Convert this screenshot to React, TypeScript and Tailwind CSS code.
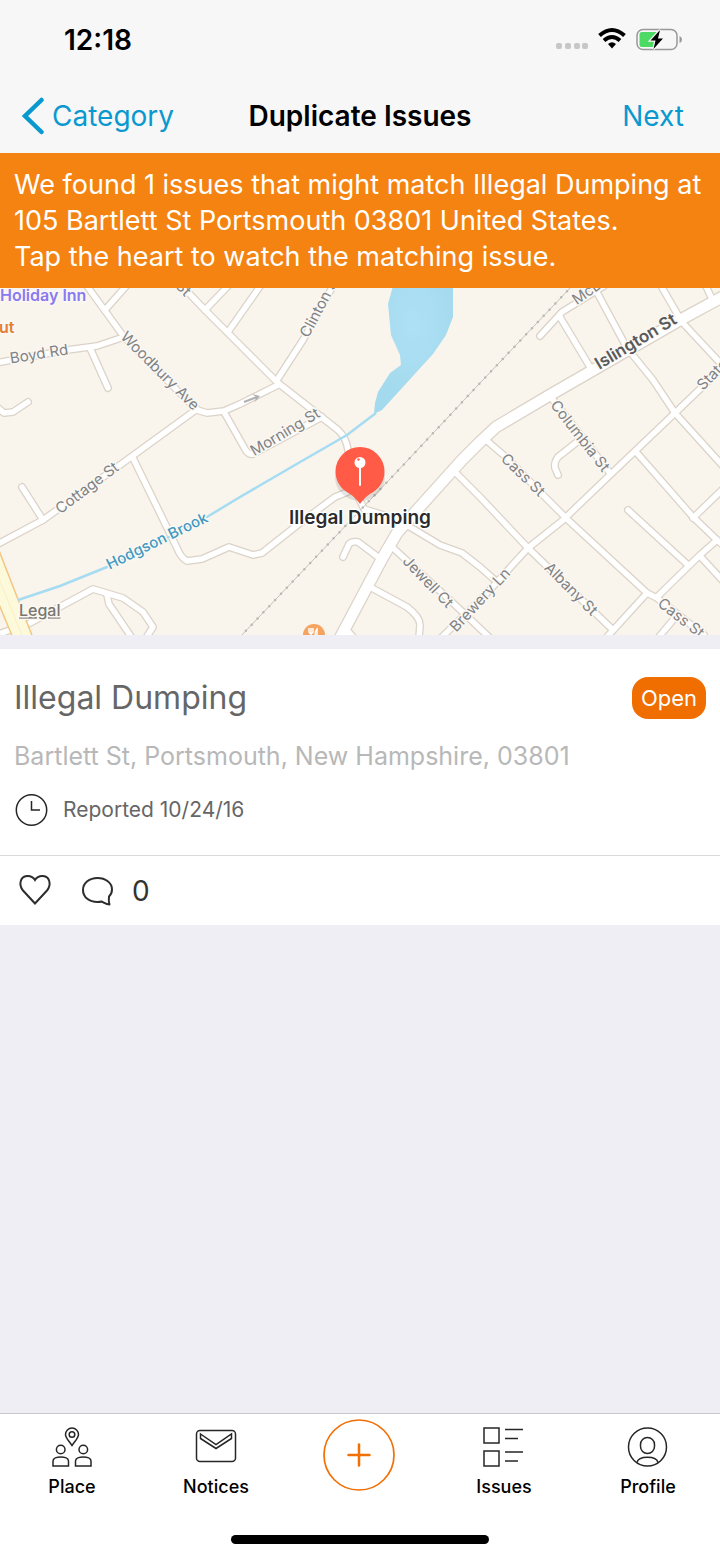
import { useState } from 'react'

const ROADS = [
  'M87 286 L124 337 L197 410 L207 413 L224 411 L240 404 L278 385',
  'M105 310 L128 284',
  'M-4 363 L67 350 L97 346 L124 337',
  'M90 348 L108 388',
  'M-4 406 L4 413 L13 412 L28 402',
  'M197 409 L120 465 L43 520 L-4 545',
  'M43 520 L22 487',
  'M133 458 L177 548 Q181 558 187 561 L202 559 L229 547 L253 555 L262 553 L300 523 L335 497 L350 491',
  'M180 284 L205 310 L240 345 L260 365 L278 383 L338 430 Q346 437 348 450 L355 490 L364 509 L390 517 L410 527 L440 545 L462 553 L480 567 L497 582',
  'M205 310 L228 286',
  'M228 332 L261 285',
  'M277 380 L303 340 L334 284',
  'M224 412 L245 449 Q248 455 253 454 L322 417',
  'M540 336 L562 312 L604 286',
  'M560 317 L590 367',
  'M593 285 L627 348 L653 380 L675 413 L722 465',
  'M660 284 L682 322 L722 365',
  'M705 284 L712 299',
  'M724 366 L675 413 L610 475 L562 521 L528 548 L487 593 L441 638',
  'M637 453 L693 517 L717 540 L724 546',
  'M693 518 L724 488',
  'M550 396 L610 473',
  'M577 442 L558 457 Q554 462 555 468 L558 475',
  'M486 440 L507 458 L543 495 L568 520 L647 593 L657 598 L704 635',
  'M457 474 L480 497 L528 548 L613 630',
  'M717 540 L700 555 L657 597',
  'M700 556 L723 581',
  'M628 510 L688 565',
  'M647 593 L606 638',
  'M673 620 L658 638',
  'M392 547 L453 603 L490 638',
  'M370 587 L407 607 Q420 617 420 625 L419 638',
  'M343 557 L349 544 Q352 541 358 542 L378 557',
  'M346 629 L354 638',
  'M-4 635 L30 623 L93 589 L123 598 L143 612 L153 627 L146 638',
  'M107 595 L109 604 L132 638',
]

const MAIN_ROAD = 'M724 296 L680 320 L550 395 L496 427 L480 442 L462 460 L417 510 L397 533 L383 557 L340 638'

const RAIL = 'M240 637 L408 460 L480 383 L572 286'

interface StreetLabel {
  name: string
  x: number
  y: number
  angle: number
}

const STREETS: StreetLabel[] = [
  { name: 'Boyd Rd', x: 39, y: 354, angle: -9 },
  { name: 'Woodbury Ave', x: 160, y: 371, angle: 45 },
  { name: 'Morning St', x: 285, y: 432, angle: -31 },
  { name: 'Cottage St', x: 87, y: 488, angle: -37 },
  { name: 'Clinton St', x: 320, y: 306, angle: -62 },
  { name: 'Columbia St', x: 580, y: 436, angle: 52 },
  { name: 'Cass St', x: 523, y: 475, angle: 44 },
  { name: 'Albany St', x: 571, y: 589, angle: 45 },
  { name: 'Jewell Ct', x: 428, y: 582, angle: 46 },
  { name: 'Brewery Ln', x: 480, y: 600, angle: -47 },
  { name: 'Cass St', x: 681, y: 618, angle: 38 },
  { name: 'State St', x: 719, y: 368, angle: -45 },
  { name: 'McDonough St', x: 617, y: 271, angle: -35 },
  { name: 'Bartlett St', x: 164, y: 269, angle: 45 },
]

function StatusBar() {
  return (
    <div className="flex h-[78px] items-center justify-between pt-px pr-9 pl-16">
      <span className="text-[28px] font-semibold text-black">12:18</span>
      <svg width="128" height="28" viewBox="0 0 128 28" aria-hidden="true">
        <g fill="#c7c7c7">
          <rect x="0" y="17" width="6" height="6" rx="2" />
          <rect x="9" y="17" width="6" height="6" rx="2" />
          <rect x="18" y="17" width="6" height="6" rx="2" />
          <rect x="26" y="17" width="6" height="6" rx="2" />
        </g>
        <g fill="none" stroke="#000" strokeWidth="4">
          <path d="M43.5 9.5 Q56 -1.5 68.500 9.5" />
          <path d="M48 14.500 Q56 7.500 64 14.500" />
        </g>
        <path d="M52 18 Q56 14.500 60 18 L56 22.500 Z" />
        <rect x="81" y="3.500" width="40" height="20" rx="6" fill="none" stroke="#999" strokeWidth="1.500" />
        <path d="M123.500 10 Q126 11 126 13.500 Q126 16 123.500 17 Z" fill="#999" />
        <path d="M86 6 H101 V21 H86 Q83.500 21 83.500 18.500 V8.500 Q83.500 6 86 6Z" fill="#4cd964" />
        <path
          d="M104 4 L94.500 14.500 H99.500 L97.500 23 L107 12.500 H102 Z"
          fill="#000"
          stroke="#f7f7f7"
          strokeWidth="2.500"
          paintOrder="stroke"
        />
      </svg>
    </div>
  )
}

function NavBar() {
  return (
    <nav className="grid h-[75px] grid-cols-[1fr_auto_1fr] items-center px-5">
      <button type="button" className="flex items-center gap-[7px] justify-self-start text-[28px] text-[#0a99cf]">
        <svg width="25" height="38" viewBox="0 0 25 38" aria-hidden="true">
          <path d="M21.500 3 L5 19 L21.500 35" fill="none" stroke="currentColor" strokeWidth="4.500" strokeLinecap="round" />
        </svg>
        Category
      </button>
      <h1 className="text-[28px] font-semibold text-black">Duplicate Issues</h1>
      <button type="button" className="justify-self-end pr-4 text-[28px] text-[#0a99cf]">
        Next
      </button>
    </nav>
  )
}

function IssueMap() {
  return (
    <svg
      className="block h-[347px] w-full bg-[#f9f4ec]"
      viewBox="0 288 720 347"
      preserveAspectRatio="xMidYMid slice"
      role="img"
      aria-label="Map of the issue location"
    >
      <defs>
        <radialGradient id="pond" cx="0.500" cy="0.300" r="0.600">
          <stop offset="0" stopColor="#aee0f6" />
          <stop offset="1" stopColor="#a4daed" />
        </radialGradient>
      </defs>

      {/* Water */}
      <path
        d="M393 286 L388 304 L391 335 L400 355 L401 365 L390 373 L378 392 L375 403 L374 414 L382 410 L433 354 L446 335 L453 317 V286Z"
        fill="url(#pond)"
      />

      {/* Roads */}
      <g fill="none" strokeLinecap="round" strokeLinejoin="round">
        <g stroke="#dbd3c8" strokeWidth="8">
          {ROADS.map((d) => (
            <path key={d} d={d} />
          ))}
        </g>
        <path d={MAIN_ROAD} stroke="#dbd3c8" strokeWidth="13" />
        <g stroke="#fff" strokeWidth="5.500">
          {ROADS.map((d) => (
            <path key={d} d={d} />
          ))}
        </g>
        <path d={MAIN_ROAD} stroke="#fff" strokeWidth="10.500" />
      </g>
      <path d="M-2 548 L33 638 H13 L-2 602Z" fill="#fdfadb" stroke="#f4c684" strokeWidth="1.500" />
      <path d="M-2 576 L23 638" stroke="#f8eec4" />
      <path
        d="M18 600 L60 586 L107 567 L167 538 L207 517 L240 497 L295 465 L347 435 L376 413"
        fill="none"
        stroke="#a5dcf2"
        strokeWidth="2.500"
      />

      {/* Railway */}
      <path d={RAIL} fill="none" stroke="#c4c2c0" strokeWidth="1" />
      <path d={RAIL} fill="none" stroke="#b9b7b6" strokeWidth="2.500" strokeLinecap="round" strokeDasharray="0 8.500" />

      {/* One way arrow */}
      <path d="M244 402 L257 397" fill="none" stroke="#b0b0b0" strokeWidth="2" />
      <path d="M252 394 L260 396 L255 402 L256 397Z" fill="#b0b0b0" />

      {/* Labels */}
      <g textAnchor="middle" stroke="#fbf8f3" strokeWidth="3" paintOrder="stroke" strokeLinejoin="round" fontSize="15">
        <g fill="#808285">
          {STREETS.map((s) => (
            <text key={s.name + s.x} transform={`translate(${s.x} ${s.y}) rotate(${s.angle})`} y="5">
              {s.name}
            </text>
          ))}
        </g>
        <text transform="translate(636 342) rotate(-31)" y="5" fill="#58595b" fontSize="17" fontWeight="600">
          Islington St
        </text>
        <text transform="translate(157 541) rotate(-26)" y="5" fill="#4298bf" fontWeight="500">
          Hodgson Brook
        </text>
      </g>
      <g fontSize="16" fontWeight="600" stroke="#fbf8f3" strokeWidth="3" paintOrder="stroke">
        <text x="0" y="301" fill="#8a7af0">
          Holiday Inn
        </text>
        <text x="-1" y="333" fill="#e07f35">
          ut
        </text>
        <a href="#legal">
          <text x="19" y="616" fontWeight="500" fill="#78756f" textDecoration="underline">
            Legal
          </text>
        </a>
      </g>

      {/* Restaurant */}
      <circle cx="314" cy="635" r="11" fill="#f5a35f" />
      <path
        d="M309 628 V632 Q311 635 313 632 V628 M311 628 V638 M317 638 V629 Q315 631 315 635 H317"
        fill="none"
        stroke="#fff"
        strokeWidth="1.500"
      />

      {/* Pin */}
      <ellipse cx="360" cy="477" rx="25" ry="24" fill="#000" opacity="0.100" />
      <path
        d="M360 447 A24.500 24.500 0 0 1 384.500 471.500 C384.500 482 378 490 370 494 Q365 497 360 504 Q355 497 350 494 C342 490 335.500 482 335.500 471.500 A24.500 24.500 0 0 1 360 447Z"
        fill="#ff5b47"
      />
      <rect x="359" y="465" width="2" height="21" rx="1" fill="#fff" />
      <circle cx="360" cy="462.500" r="5.500" fill="#fff" />
      <circle cx="358.500" cy="459.500" r="1.200" fill="#ff5b47" />
      <text
        x="360"
        y="524"
        textAnchor="middle"
        fontSize="19"
        fontWeight="600"
        fill="#2b2b2d"
        stroke="#fff"
        strokeWidth="3"
        strokeLinejoin="round"
        paintOrder="stroke"
      >
        Illegal Dumping
      </text>
    </svg>
  )
}

function IssueCard() {
  const [watching, setWatching] = useState(false)

  return (
    <article className="mt-[14px] bg-white">
      <div className="border-b border-[#d9d9d9] px-[14px] py-7">
        <div className="flex items-center justify-between">
          <h2 className="text-[32px] leading-[42px] text-[#666]">Illegal Dumping</h2>
          <span className="rounded-2xl bg-[#f06d00] px-[9px] text-[22px] leading-[42px] text-white">Open</span>
        </div>
        <p className="mt-[21px] text-[25px] leading-8 text-[#b8b8b8]">Bartlett St, Portsmouth, New Hampshire, 03801</p>
        <div className="mt-[21px] flex items-center gap-[15px]">
          <svg width="34" height="34" viewBox="0 0 34 34" fill="none" stroke="#262626" strokeWidth="1.500" aria-hidden="true">
            <circle cx="17.500" cy="17" r="15.200" />
            <path d="M17.500 8 V17 H26" />
          </svg>
          <span className="text-[21px] leading-8 text-[#666]">Reported 10/24/16</span>
        </div>
      </div>
      <div className="flex h-[69px] items-center px-[18px]">
        <button
          type="button"
          aria-label="Watch issue"
          aria-pressed={watching}
          onClick={() => setWatching(!watching)}
        >
          <svg width="34" height="34" viewBox="0 0 34 34" fill={watching ? '#f06d00' : 'none'} stroke="#2d2d2d" strokeWidth="2">
            <path d="M17 29.500 L5 16.500 C0.500 11 2 2.500 9 2 C13 1.700 15.500 3.500 17 6 C18.500 3.500 21 1.700 25 2 C32 2.500 33.500 11 29 16.500Z" />
          </svg>
        </button>
        <button type="button" aria-label="Comments" className="ml-7 flex items-center gap-4 text-[28px] text-[#333]">
          <svg width="36" height="34" viewBox="0 0 36 34" fill="none" stroke="#2d2d2d" strokeWidth="2" strokeLinejoin="round">
            <path d="M29 22.500 C31 20.500 32 18 32 15.500 C32 8.800 25.500 4 17.500 4 C9.500 4 3 8.800 3 16 C3 23.500 9.500 28 17.500 28 C19 28 20 28 21.500 27.500 C24 28.500 26 30.500 29.500 30.500 C28.500 28 28.700 25 29 22.500Z" />
          </svg>
          0
        </button>
      </div>
    </article>
  )
}

function PlaceIcon() {
  return (
    <svg width="42" height="42" viewBox="0 0 42 42" fill="none" stroke="#262626" strokeWidth="1.500">
      <path d="M21 19.500 C18 15 14.500 12 14.500 8.500 A6.500 6.500 0 0 1 27.500 8.500 C27.500 12 24 15 21 19.500Z" />
      <circle cx="21" cy="8.500" r="2.800" />
      <circle cx="9.700" cy="23.500" r="4.300" />
      <circle cx="32.300" cy="23.500" r="4.300" />
      <path d="M2 40 V35 C2 29.500 17.500 29.500 17.500 35 V40Z" />
      <path d="M24.500 40 V35 C24.500 29.500 40 29.500 40 35 V40Z" />
    </svg>
  )
}

function NoticesIcon() {
  return (
    <svg width="42" height="42" viewBox="0 0 42 42" fill="none" stroke="#262626" strokeWidth="1.500">
      <rect x="1.500" y="4.500" width="39" height="31" rx="3.500" />
      <path d="M5.500 8 L21 18.500 L36.500 8 V12.500 L21 22.500 L5.500 12.500Z" />
    </svg>
  )
}

function IssuesIcon() {
  return (
    <svg width="42" height="42" viewBox="0 0 42 42" fill="none" stroke="#262626" strokeWidth="1.500">
      <rect x="1" y="2" width="15" height="15" />
      <rect x="1" y="25" width="15" height="15" />
      <path d="M22 3.500 H40 M22 12.500 H35 M22 26 H40 M22 35 H35" />
    </svg>
  )
}

function ProfileIcon() {
  return (
    <svg width="42" height="42" viewBox="0 0 42 42" fill="none" stroke="#262626" strokeWidth="1.500">
      <circle cx="20.500" cy="21" r="19" />
      <rect x="13.500" y="11.500" width="14" height="16" rx="7" />
      <path d="M10 36.500 C11.500 29.500 29.500 29.500 31 36.500" />
    </svg>
  )
}

interface TabProps {
  label: string
  children: React.ReactNode
}

function Tab({ label, children }: TabProps) {
  return (
    <button type="button" className="flex flex-col items-center gap-[7px] pt-3 text-[18px] leading-6 font-medium text-black">
      {children}
      {label}
    </button>
  )
}

export default function App() {
  return (
    <div className="flex min-h-screen flex-col bg-[#efeef4] font-['Inter',sans-serif]">
      <header className="bg-[#f7f7f7]">
        <StatusBar />
        <NavBar />
      </header>

      <main className="flex-1">
        <p className="bg-[#f58311] px-[14px] pt-[14px] pb-[13px] text-[27px] leading-9 text-white">
          We found 1 issues that might match Illegal Dumping at 105 Bartlett St Portsmouth 03801 United States.
          <br />
          Tap the heart to watch the matching issue.
        </p>
        <IssueMap />
        <IssueCard />
      </main>

      <footer className="border-t border-[#c8c8cc] bg-white">
        <div className="grid grid-cols-5 items-start">
          <Tab label="Place">
            <PlaceIcon />
          </Tab>
          <Tab label="Notices">
            <NoticesIcon />
          </Tab>
          <button type="button" aria-label="Report an issue" className="mt-[5px] justify-self-center">
            <svg width="74" height="72" viewBox="0 0 74 72" fill="none" stroke="#f26f05">
              <circle cx="36" cy="36" r="35" strokeWidth="1.700" />
              <path d="M36 25.500 V46.500 M25.500 36 H46.500" strokeWidth="2.500" strokeLinecap="round" />
            </svg>
          </button>
          <Tab label="Issues">
            <IssuesIcon />
          </Tab>
          <Tab label="Profile">
            <ProfileIcon />
          </Tab>
        </div>
        <div className="mx-auto mt-9 mb-[14px] h-[9px] w-[258px] rounded-full bg-black" />
      </footer>
    </div>
  )
}
